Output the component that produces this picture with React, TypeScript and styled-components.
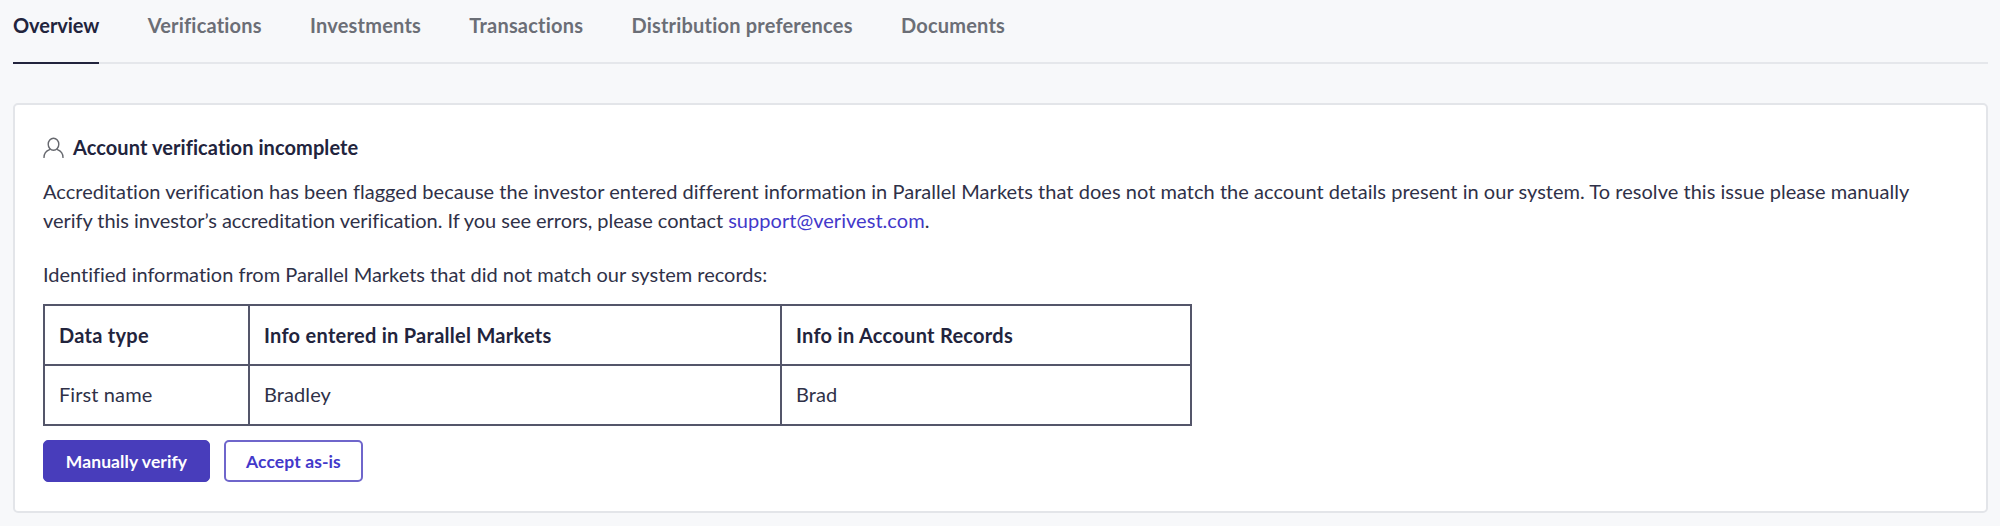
import styled, { createGlobalStyle } from "styled-components";

const GlobalStyle = createGlobalStyle`
  html,
  body {
    margin: 0;
    background: #f7f8fa;
  }

  body {
    font-family: "Lato", "Open Sans", sans-serif;
    color: #2f3148;
  }
`;

const Page = styled.div`
  width: 2000px;
  height: 526px;
  padding: 0 12px 0 13px;
  box-sizing: border-box;
  overflow: hidden;
`;

const TabBar = styled.nav`
  display: flex;
  gap: 48.3px;
  height: 64px;
  box-sizing: border-box;
  border-bottom: 2px solid #e5e7eb;
`;

const Tab = styled.a<{ $active?: boolean }>`
  height: 64px;
  box-sizing: border-box;
  padding-top: 13px;
  line-height: 24px;
  font-size: 20px;
  font-weight: 700;
  letter-spacing: ${({ $active }) => ($active ? "-0.05px" : "0.2px")};
  color: ${({ $active }) => ($active ? "#22243d" : "#6b6e76")};
  border-bottom: 2px solid ${({ $active }) => ($active ? "#22243d" : "transparent")};
`;

const Card = styled.section`
  margin-top: 39px;
  height: 410px;
  box-sizing: border-box;
  padding: 29px 28px 0;
  background: #fff;
  border: 2px solid #e3e5e9;
  border-radius: 5px;
`;

const Heading = styled.h2`
  display: flex;
  align-items: center;
  gap: 9px;
  margin: 0;
  height: 27px;
  font-size: 20px;
  font-weight: 700;
  letter-spacing: 0.08px;
  line-height: 27px;
  color: #22243d;
`;

const Paragraph = styled.p`
  margin: 16px 0 0;
  font-size: 20px;
  line-height: 29px;
  letter-spacing: 0.035px;
`;

const Intro = styled(Paragraph)`
  margin-top: 25px;
  letter-spacing: -0.01px;
`;

const TightLine = styled.span`
  letter-spacing: -0.04px;
`;

const SupportLink = styled.a`
  color: #4338ca;
`;

const MismatchTable = styled.table`
  margin-top: 15px;
  width: 1147px;
  table-layout: fixed;
  border-collapse: collapse;
  font-size: 20px;
`;

const HeadCell = styled.th<{ $width: number }>`
  width: ${({ $width }) => $width}px;
  height: 60px;
  box-sizing: border-box;
  padding: 0 14px 1px;
  border: 2px solid #54566a;
  text-align: left;
  font-weight: 700;
  letter-spacing: 0.28px;
  color: #22243d;
`;

const Cell = styled.td`
  height: 60px;
  box-sizing: border-box;
  padding: 0 14px 2px;
  border: 2px solid #54566a;
  letter-spacing: 0.1px;
`;

const Actions = styled.div`
  display: flex;
  gap: 14px;
  margin-top: 14px;
`;

const PrimaryButton = styled.button`
  height: 42px;
  width: 167px;
  padding: 0;
  border: 1px solid #483dbb;
  border-radius: 5px;
  background: #483dbb;
  color: #fff;
  font: 700 17.5px "Lato", sans-serif;
  letter-spacing: 0.1px;
`;

const OutlineButton = styled(PrimaryButton)`
  width: 139px;
  border: 2px solid #6f66cb;
  background: #fff;
  color: #4338ca;
`;

const PersonIcon = () => (
  <svg width="21" height="21" viewBox="0 0 21 21" fill="none" stroke="#66686e" strokeWidth="1.4" strokeLinecap="round">
    <ellipse cx="10.5" cy="7.2" rx="5.3" ry="6" />
    <path d="M1 20.5c0-4 2.6-6.8 5.6-7.9" />
    <path d="M20 20.5c0-4-2.6-6.8-5.6-7.9" />
  </svg>
);

export default function App() {
  return (
    <Page>
      <GlobalStyle />
      <TabBar>
        <Tab $active>Overview</Tab>
        <Tab>Verifications</Tab>
        <Tab>Investments</Tab>
        <Tab>Transactions</Tab>
        <Tab>Distribution preferences</Tab>
        <Tab>Documents</Tab>
      </TabBar>
      <Card>
        <Heading>
          <PersonIcon />
          Account verification incomplete
        </Heading>
        <Paragraph>
          Accreditation verification has been flagged because the investor entered different information in Parallel
          Markets that does not match the account details present in our system. To resolve this issue please manually{" "}
          <TightLine>verify this investor’s accreditation verification. If you see errors, please contact </TightLine>
          <SupportLink>support@verivest.com</SupportLink>.
        </Paragraph>
        <Intro>Identified information from Parallel Markets that did not match our system records:</Intro>
        <MismatchTable>
          <thead>
            <tr>
              <HeadCell $width={205}>Data type</HeadCell>
              <HeadCell $width={532}>Info entered in Parallel Markets</HeadCell>
              <HeadCell $width={410}>Info in Account Records</HeadCell>
            </tr>
          </thead>
          <tbody>
            <tr>
              <Cell>First name</Cell>
              <Cell>Bradley</Cell>
              <Cell>Brad</Cell>
            </tr>
          </tbody>
        </MismatchTable>
        <Actions>
          <PrimaryButton>Manually verify</PrimaryButton>
          <OutlineButton>Accept as-is</OutlineButton>
        </Actions>
      </Card>
    </Page>
  );
}
